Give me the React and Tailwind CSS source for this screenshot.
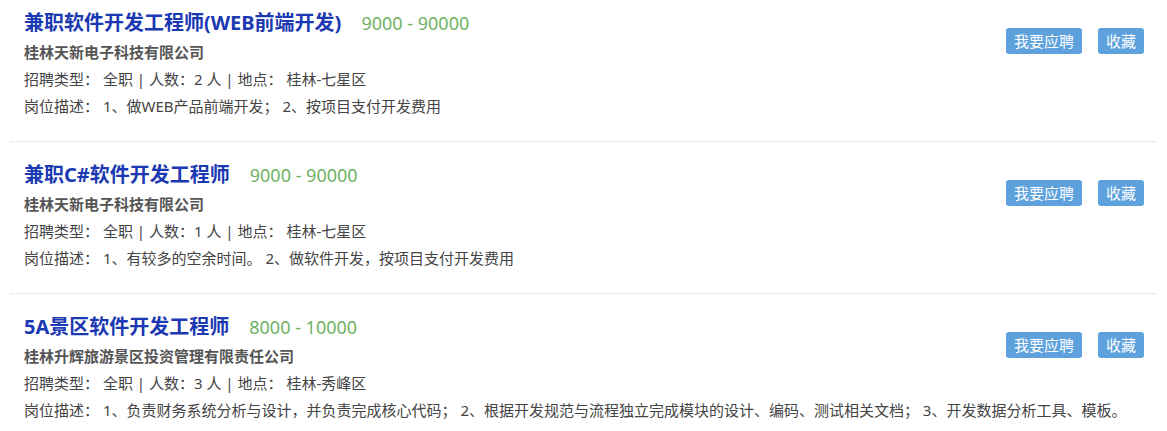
import React from 'react';

const jobs = [
  {
    title: '兼职软件开发工程师(WEB前端开发)',
    salary: '9000 - 90000',
    company: '桂林天新电子科技有限公司',
    count: 2,
    place: '桂林-七星区',
    desc: '1、做WEB产品前端开发； 2、按项目支付开发费用',
  },
  {
    title: '兼职C#软件开发工程师',
    salary: '9000 - 90000',
    company: '桂林天新电子科技有限公司',
    count: 1,
    place: '桂林-七星区',
    desc: '1、有较多的空余时间。 2、做软件开发，按项目支付开发费用',
  },
  {
    title: '5A景区软件开发工程师',
    salary: '8000 - 10000',
    company: '桂林升辉旅游景区投资管理有限责任公司',
    count: 3,
    place: '桂林-秀峰区',
    desc: '1、负责财务系统分析与设计，并负责完成核心代码； 2、根据开发规范与流程独立完成模块的设计、编码、测试相关文档； 3、开发数据分析工具、模板。',
  },
];

const font = "font-['Noto_Sans','Noto_Sans_CJK_SC',sans-serif]";

const JobItem = ({ job }) => (
  <li className="flow-root border-b border-dotted border-[#d6d6d6] px-[14px] pt-[18px] pb-[21px] first:pt-[8px] last:border-b-0">
    <div className="float-right mt-[20px] mr-[-1px] flex items-center gap-[16px]">
      <button className="h-[26px] rounded-[3px] bg-[#5da2dc] px-[8px] text-[15px] leading-[26px] text-white">
        我要应聘
      </button>
      <button className="h-[26px] rounded-[3px] bg-[#5da2dc] px-[8px] text-[15px] leading-[26px] text-white">
        收藏
      </button>
    </div>
    <div className="flex items-baseline gap-[20px] leading-[30px]">
      <a href="#" className="text-[20px] font-bold text-[#1b39b2]">{job.title}</a>
      <span className="text-[18px] text-[#6db362]">{job.salary}</span>
    </div>
    <div className="text-[15px] font-bold leading-[28px] text-[#555]">{job.company}</div>
    <div className="whitespace-nowrap text-[15px] leading-[27px] text-[#444]">
      招聘类型：&nbsp;全职 | 人数：{job.count} 人 | 地点：&nbsp;{job.place}
    </div>
    <div className="whitespace-nowrap text-[15px] leading-[27px] text-[#444]">
      岗位描述：&nbsp;{job.desc}
    </div>
  </li>
);

export default function App() {
  return (
    <div className={`min-h-[431px] w-full bg-white ${font}`}>
      <ul className="mx-[10px]">
        {jobs.map((job, i) => (
          <JobItem key={i} job={job} />
        ))}
      </ul>
    </div>
  );
}
